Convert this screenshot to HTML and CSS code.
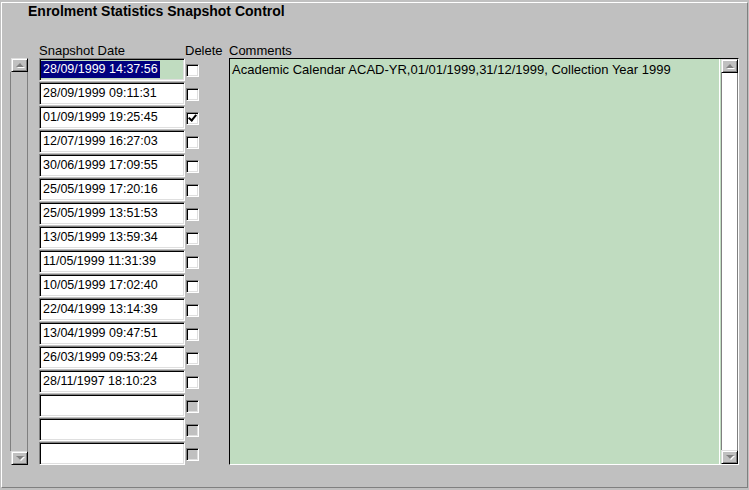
FILE: index.html
```html
<!DOCTYPE html>
<html lang="en">
<head>
<meta charset="UTF-8">
<title>Enrolment Statistics Snapshot Control</title>
<link rel="stylesheet" href="styles.css">
</head>
<body>
	<div class="frame">
		<div class="title">Enrolment Statistics Snapshot Control</div>
		<div class="panel">
			<div class="col-scroll">
				<div class="sb sb-off">
					<div class="sb-btn"><span class="arr up"></span></div>
					<div class="sb-track"></div>
					<div class="sb-btn"><span class="arr down"></span></div>
				</div>
			</div>
			<div class="col-date">
				<div class="lbl">Snapshot Date</div>
				<div class="fld cur"><span class="sel">28/09/1999 14:37:56</span></div>
				<div class="fld">28/09/1999 09:11:31</div>
				<div class="fld">01/09/1999 19:25:45</div>
				<div class="fld">12/07/1999 16:27:03</div>
				<div class="fld">30/06/1999 17:09:55</div>
				<div class="fld">25/05/1999 17:20:16</div>
				<div class="fld">25/05/1999 13:51:53</div>
				<div class="fld">13/05/1999 13:59:34</div>
				<div class="fld">11/05/1999 11:31:39</div>
				<div class="fld">10/05/1999 17:02:40</div>
				<div class="fld">22/04/1999 13:14:39</div>
				<div class="fld">13/04/1999 09:47:51</div>
				<div class="fld">26/03/1999 09:53:24</div>
				<div class="fld">28/11/1997 18:10:23</div>
				<div class="fld"></div>
				<div class="fld"></div>
				<div class="fld"></div>
			</div>
			<div class="col-del">
				<div class="lbl">Delete</div>
				<div class="cell"><span class="chk"></span></div>
				<div class="cell"><span class="chk"></span></div>
				<div class="cell"><span class="chk on"></span></div>
				<div class="cell"><span class="chk"></span></div>
				<div class="cell"><span class="chk"></span></div>
				<div class="cell"><span class="chk"></span></div>
				<div class="cell"><span class="chk"></span></div>
				<div class="cell"><span class="chk"></span></div>
				<div class="cell"><span class="chk"></span></div>
				<div class="cell"><span class="chk"></span></div>
				<div class="cell"><span class="chk"></span></div>
				<div class="cell"><span class="chk"></span></div>
				<div class="cell"><span class="chk"></span></div>
				<div class="cell"><span class="chk"></span></div>
				<div class="cell"><span class="chk dis"></span></div>
				<div class="cell"><span class="chk dis"></span></div>
				<div class="cell"><span class="chk dis"></span></div>
			</div>
			<div class="col-comm">
				<div class="lbl">Comments</div>
				<div class="memo">
					<div class="memo-text">Academic Calendar ACAD-YR,01/01/1999,31/12/1999, Collection Year 1999</div>
					<div class="sb sb-on">
						<div class="sb-btn"><span class="arr up"></span></div>
						<div class="sb-track"></div>
						<div class="sb-btn"><span class="arr down"></span></div>
					</div>
				</div>
			</div>
		</div>
	</div>
</body>
</html>
```
FILE: styles.css
```css
html,body{margin: 0;padding: 0;}
body{
	width: 749px;
	height: 490px;
	background: #c0c0c0;
	font-family: 'Liberation Sans', Arial, sans-serif;
	font-size: 13px;
	color: #000;
	overflow: hidden;
}
.frame{
	margin: 2px 0 0 1px;
	width: 745px;
	height: 484px;
	border: 1px solid;
	border-color: #fff #808080 #808080 #fff;
}
.title{
	margin: 0 0 0 26px;
	height: 16px;
	font-size: 14px;
	font-weight: bold;
	line-height: 16px;
}
.panel{
	display: flex;
	margin: 24px 0 0 8px;
}
.lbl{
	height: 15px;
	line-height: 15px;
	white-space: nowrap;
}

/* scrollbars */
.col-scroll{padding-top: 15px;width: 18px;}
.sb{
	display: flex;
	flex-direction: column;
	width: 17px;
	height: 407px;
}
.col-scroll .sb{margin-left: 1px;}
.sb-btn{
	height: 14px;
	box-sizing: border-box;
	background: #c0c0c0;
	border: 1px solid;
	border-color: #dfdfdf #000 #000 #dfdfdf;
	box-shadow: inset 1px 1px #fff, inset -1px -1px #808080;
	display: flex;
	align-items: center;
	justify-content: center;
}
.sb-track{flex: 1;box-sizing: border-box;}
.sb-off .sb-track{
	background: #c0c0c0;
	border-left: 1px solid #808080;
	border-right: 1px solid #808080;
	margin: 0 0 0 -1px;
}
.sb-on{margin-left: 1px;}
.sb-on .sb-track{
	background: #fff;
	border-left: 1px solid #808080;
	border-right: 1px solid #808080;
}
.arr{width: 0;height: 0;border-left: 4px solid transparent;border-right: 4px solid transparent;}
.arr.up{border-bottom: 4px solid #808080;filter: drop-shadow(1px 1px 0 #fff);}
.arr.down{border-top: 4px solid #808080;filter: drop-shadow(1px 1px 0 #fff);}

/* date fields */
.col-date{margin-left: 11px;width: 146px;}
.fld{
	box-sizing: border-box;
	height: 23px;
	margin-bottom: 1px;
	background: #fff;
	border: 1px solid;
	border-color: #808080 #fff #fff #808080;
	box-shadow: inset 1px 1px #000, inset -1px -1px #dfdfdf;
	padding: 2px 0 0 3px;
	font-size: 12.5px;
	line-height: 17px;
	white-space: nowrap;
}
.fld.cur{background: #c0dcc0;padding-left: 1px;}
.sel{background: #000080;color: #fff;display: inline-block;padding: 0 2px;}

/* delete checkboxes */
.col-del{width: 44px;}
.cell{
	height: 24px;
	display: flex;
	align-items: center;
	padding-left: 1px;
}
.chk{
	box-sizing: border-box;
	width: 13px;
	height: 13px;
	margin-top: 1px;
	background: #fff;
	border: 1px solid;
	border-color: #808080 #fff #fff #808080;
	box-shadow: inset 1px 1px #000, inset -1px -1px #dfdfdf;
	position: relative;
}
.chk.dis{background: #c0c0c0;}
.chk.on::after{
	content: '';
	position: absolute;
	left: 3px;
	top: 0;
	width: 3px;
	height: 6px;
	border: solid #000;
	border-width: 0 2px 2px 0;
	transform: rotate(40deg);
}

/* comments */
.col-comm{width: 510px;}
.memo{
	display: flex;
	height: 407px;
	box-sizing: border-box;
	border: 1px solid;
	border-color: #000 #fff #fff #000;
	background: #c0dcc0;
}
.memo-text{
	flex: 1;
	padding: 3px 0 0 2px;
	line-height: 15px;
	white-space: nowrap;
	overflow: hidden;
	border-right: 1px solid #fff;
}
.memo .sb{height: 405px;}
```
